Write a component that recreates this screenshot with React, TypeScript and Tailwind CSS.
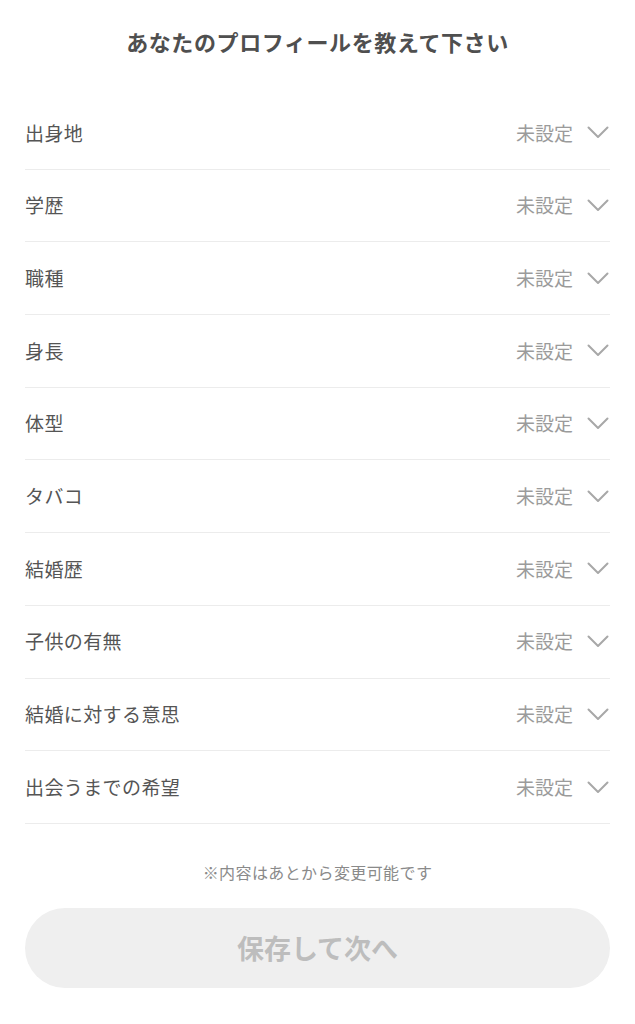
import React from "react";

const items = [
  "出身地",
  "学歴",
  "職種",
  "身長",
  "体型",
  "タバコ",
  "結婚歴",
  "子供の有無",
  "結婚に対する意思",
  "出会うまでの希望",
];

function Chevron() {
  return (
    <svg width="22" height="13" viewBox="0 0 22 13" fill="none" className="shrink-0">
      <path d="M1.5 1.5 L11 11 L20.5 1.5" stroke="#a8a8a8" strokeWidth="2" strokeLinecap="round" strokeLinejoin="round" />
    </svg>
  );
}

export default function App() {
  return (
    <div
      className="w-[635px] min-h-[1024px] bg-white"
      style={{ fontFamily: '"Noto Sans CJK JP", "Noto Sans", sans-serif' }}
    >
      <div className="pt-[26px] text-center text-[22px] tracking-[0.6px] font-bold text-[#4f4f4f] leading-[30px]">
        あなたのプロフィールを教えて下さい
      </div>
      <div className="mx-[25px] mt-[41px]">
        {items.map((label) => (
          <div
            key={label}
            className="flex items-center justify-between h-[72.7px] border-b border-[#ececec]"
          >
            <span className="text-[19px] tracking-[0.4px] text-[#555555]">{label}</span>
            <div className="flex items-center gap-[14px] pr-[1px]">
              <span className="text-[19px] text-[#9b9b9b]">未設定</span>
              <Chevron />
            </div>
          </div>
        ))}
      </div>
      <div className="mt-[38px] text-center text-[16px] tracking-[0.4px] text-[#8a8a8a] leading-[20px]">
        ※内容はあとから変更可能です
      </div>
      <div className="mx-[25px] mt-[26px] h-[80px] rounded-full bg-[#efefef] flex items-center justify-center">
        <span className="text-[27px] font-bold text-[#bdbdbd]">保存して次へ</span>
      </div>
    </div>
  );
}
